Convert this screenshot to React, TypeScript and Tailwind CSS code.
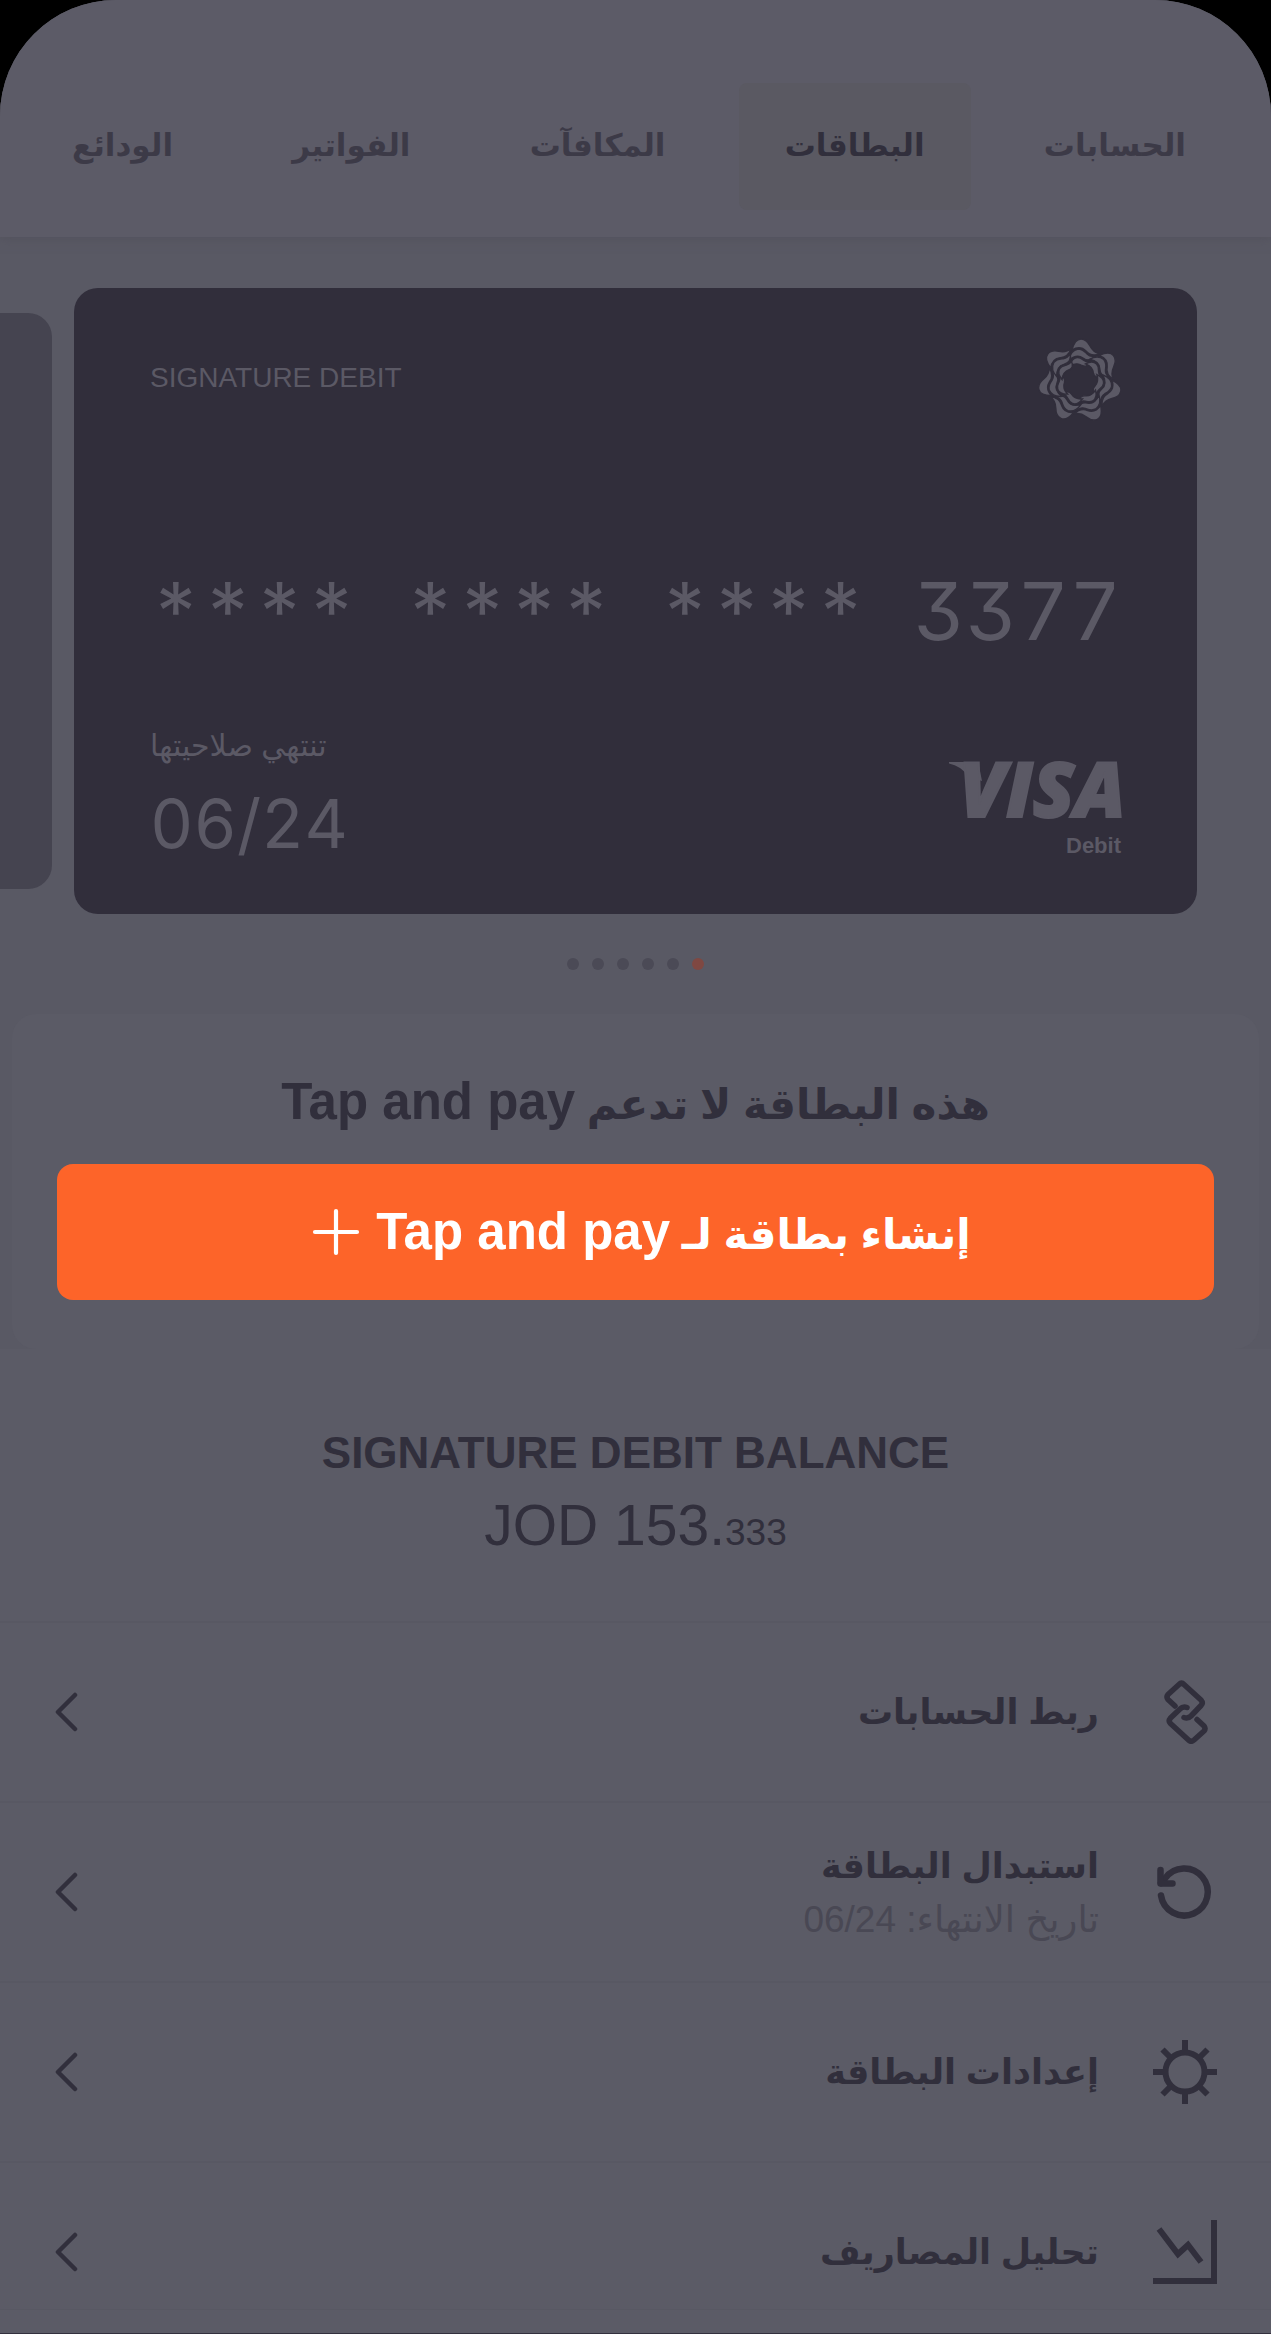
import { Plus } from "lucide-react";

const tabs = [
  { label: "الحسابات", active: false },
  { label: "البطاقات", active: true },
  { label: "المكافآت", active: false },
  { label: "الفواتير", active: false },
  { label: "الودائع", active: false },
];

const LinkIcon = () => (
  <svg className="h-16 w-16" viewBox="0 0 64 64" fill="none" stroke="currentColor" strokeWidth="5.500" strokeLinecap="round" strokeLinejoin="round">
    <path d="M22 26 L15 19.500 Q13 17 15 14.500 L26 4.500 Q28.500 2 31 4.500 L48 20 Q50.500 23 48 25.500 L38 36 Q35 39 31 37.500" />
    <path d="M44 39.500 L51 46 Q53 48.500 51 51 L41 60 Q38 62.500 35.500 60 L17.500 43.500 Q15 41 17.500 38 L27 29 Q30 26 34 27.500" />
  </svg>
);

const ReplaceIcon = () => (
  <svg className="h-16 w-16" viewBox="0 0 64 64" fill="none" stroke="currentColor" strokeWidth="6.500" strokeLinecap="round" strokeLinejoin="round">
    <path d="M8 35.500 A23.500 23.500 0 1 0 12 18.500 L8 23" />
    <path d="M7.500 10 V23.500 H19.500" />
  </svg>
);

const SettingsIcon = () => (
  <svg className="h-16 w-16" viewBox="0 0 64 64" fill="none" stroke="currentColor" strokeWidth="6">
    <circle cx="32" cy="32" r="19.500" />
    <path d="M32 0 V12 M32 52 V64 M0 32 H12 M52 32 H64 M9.500 9.500 L18 18 M46 46 L54.500 54.500 M9.500 54.500 L18 46 M46 18 L54.500 9.500" />
  </svg>
);

const SpendingIcon = () => (
  <svg className="h-16 w-16" viewBox="0 0 64 64" fill="none" stroke="currentColor" strokeWidth="6">
    <path d="M61 0 V61 H0" />
    <path d="M6 9 L25 34 L35 25 L48 42" />
  </svg>
);

const BackChevron = () => (
  <svg className="h-10 w-6" viewBox="0 0 24 40" fill="none" stroke="currentColor" strokeWidth="4.500" strokeLinecap="round" strokeLinejoin="round">
    <path d="M21 3 L4 20 L21 37" />
  </svg>
);

const actions = [
  { title: "ربط الحسابات", icon: LinkIcon },
  { title: "استبدال البطاقة", description: "تاريخ الانتهاء: 06/24", icon: ReplaceIcon },
  { title: "إعدادات البطاقة", icon: SettingsIcon },
  { title: "تحليل المصاريف", icon: SpendingIcon },
];

const petals = [0, 1, 2, 3, 4, 5, 6];

const BankLogo = () => (
  <svg aria-label="Bank" className="h-[84px] w-[84px]" role="img" viewBox="-43 -43 84 84" fill="currentColor" stroke="#312e3b" strokeWidth="1.400">
    {petals.map((petal) => (
      <g key={petal} transform={`rotate(${(petal * 360) / 7})`}>
        <path d="M-8 -31 C-6 -39 -3 -42 1 -42 C6 -42 8 -39 10 -35 C12 -31 15 -28 20 -27 C13 -25 9 -26 6 -30 C2 -34 -3 -34 -8 -31Z" />
        <path d="M-11 -21 C-10 -28 -7 -31 -2 -32 C3 -32 5 -29 7 -27 C9 -25 11 -24 15 -25 C12 -20 7 -20 3 -23 C-1 -26 -5 -26 -11 -21Z" />
        <path d="M-10 -15 C-9 -20 -7 -23 -3 -23.500 C0 -24 2 -22 4 -20.500 C6 -19 7 -18.500 10 -19 C8 -14.500 5 -14 2 -15.500 C-2 -18 -5 -18 -10 -15Z" />
      </g>
    ))}
  </svg>
);

const VisaLogo = () => (
  <svg aria-label="Visa" className="h-[60px] w-[176px] overflow-visible" role="img" viewBox="0 0 176 60" fill="currentColor">
    <path d="M4 3 H29 Q33 3 34 7 L37 22 L23 17 Q16 7 4 4.500Z" />
    <text
      className="font-['Open_Sans',sans-serif] text-[76px] font-extrabold italic"
      direction="ltr"
      stroke="currentColor"
      strokeWidth="2"
      x="14"
      y="58"
    >
      VISA
    </text>
  </svg>
);

export default function App() {
  return (
    <div className="min-h-screen bg-black font-['Liberation_Sans','DejaVu_Sans',sans-serif]" dir="rtl">
      <div className="relative overflow-hidden rounded-t-[116px] border-b border-[#33313e] bg-[#595964] text-[#312f3c]">
        <header className="bg-[#5c5b67] pt-[83px] pb-[27px] shadow-[0_2px_10px_#53525d]">
          <nav className="flex justify-between pr-[39px] pl-[26px]">
            {tabs.map((tab) => (
              <a
                aria-current={tab.active ? "page" : undefined}
                className={
                  tab.active
                    ? "flex h-[127px] items-center rounded-lg bg-[#5a5962] px-[46px] text-[31px] font-bold"
                    : "flex h-[127px] items-center px-[46px] text-[31px] font-bold text-[#3c3a47]"
                }
                href="#"
                key={tab.label}
              >
                {tab.label}
              </a>
            ))}
          </nav>
        </header>

        <main>
          <section className="flex items-center pt-[51px]">
            <div className="w-[74px] shrink-0" />
            <article className="flex h-[626px] flex-1 flex-col rounded-3xl bg-[#312e3b] px-[76px] pt-[50px] pb-[52px] text-[#5b5965]" dir="ltr">
              <div className="flex items-start justify-between">
                <p className="pt-6 text-[28px] leading-8">SIGNATURE DEBIT</p>
                <BankLogo />
              </div>
              <p className="mt-[145px] flex justify-between font-['Inter',sans-serif] text-[80px] leading-[88px] tabular-nums [font-feature-settings:'tnum','cv09']">
                <span>****</span>
                <span>****</span>
                <span>****</span>
                <span>3377</span>
              </p>
              <div className="mt-auto flex items-end justify-between">
                <div className="pb-[2px]">
                  <p className="text-[30px] leading-9">تنتهي صلاحيتها</p>
                  <p className="mt-6 font-['Inter',sans-serif] text-[67px] leading-[72px] tabular-nums">06/24</p>
                </div>
                <div className="flex flex-col items-end">
                  <VisaLogo />
                  <p className="mt-[15px] mb-1 text-[22px] leading-6 font-bold">Debit</p>
                </div>
              </div>
            </article>
            <div className="mr-[22px] h-[576px] w-[52px] shrink-0 rounded-r-3xl bg-[#454450]" />
          </section>

          <div className="mt-11 flex justify-center gap-[13px]">
            <span className="h-3 w-3 rounded-full bg-[#7f4842]" />
            <span className="h-3 w-3 rounded-full bg-[#4b4a56]" />
            <span className="h-3 w-3 rounded-full bg-[#4b4a56]" />
            <span className="h-3 w-3 rounded-full bg-[#4b4a56]" />
            <span className="h-3 w-3 rounded-full bg-[#4b4a56]" />
            <span className="h-3 w-3 rounded-full bg-[#4b4a56]" />
          </div>

          <section className="mx-3 mt-11 rounded-3xl bg-[#5b5b66] px-[45px] pt-[52px] pb-[49px] text-center">
            <h2 className="text-[42px] leading-[72px] font-bold">
              هذه البطاقة لا تدعم <span className="text-[51px]">Tap and pay</span>
            </h2>
            <button className="mt-[23px] flex h-[136px] w-full items-center justify-center gap-1 rounded-2xl bg-[#fd6429] text-[42px] font-bold text-white" type="button">
              <span>
                إنشاء بطاقة لـ <span className="text-[51px]">Tap and pay</span>
              </span>
              <Plus className="h-[72px] w-[72px]" strokeWidth={1.4} />
            </button>
          </section>

          <section className="bg-[#5b5b66] pt-[78px] pb-[52px] text-center" dir="ltr">
            <h2 className="text-[44px] leading-[52px] font-bold">SIGNATURE DEBIT BALANCE</h2>
            <p className="mt-[10px] text-[57px] leading-[72px]">
              JOD 153.<span className="text-[37px]">333</span>
            </p>
          </section>

          <ul className="-mb-2 bg-[#5b5b66]">
            {actions.map((action) => {
              const Icon = action.icon;

              return (
                <li key={action.title}>
                  <a className="flex h-[180px] items-center gap-[54px] border-t-2 border-[#585863] px-[54px]" href="#">
                    <Icon />
                    <div className="flex flex-1 flex-col">
                      <span className="text-[35px] leading-[56px] font-bold">{action.title}</span>
                      {action.description && (
                        <span className="text-[37px] leading-[52px] text-[#494854]">{action.description}</span>
                      )}
                    </div>
                    <BackChevron />
                  </a>
                </li>
              );
            })}
          </ul>
        </main>

        {/* Home indicator area */}
        <div className="absolute inset-x-0 bottom-0 h-6 border-t border-[#585863] bg-[#5b5b66]" />
      </div>
    </div>
  );
}
